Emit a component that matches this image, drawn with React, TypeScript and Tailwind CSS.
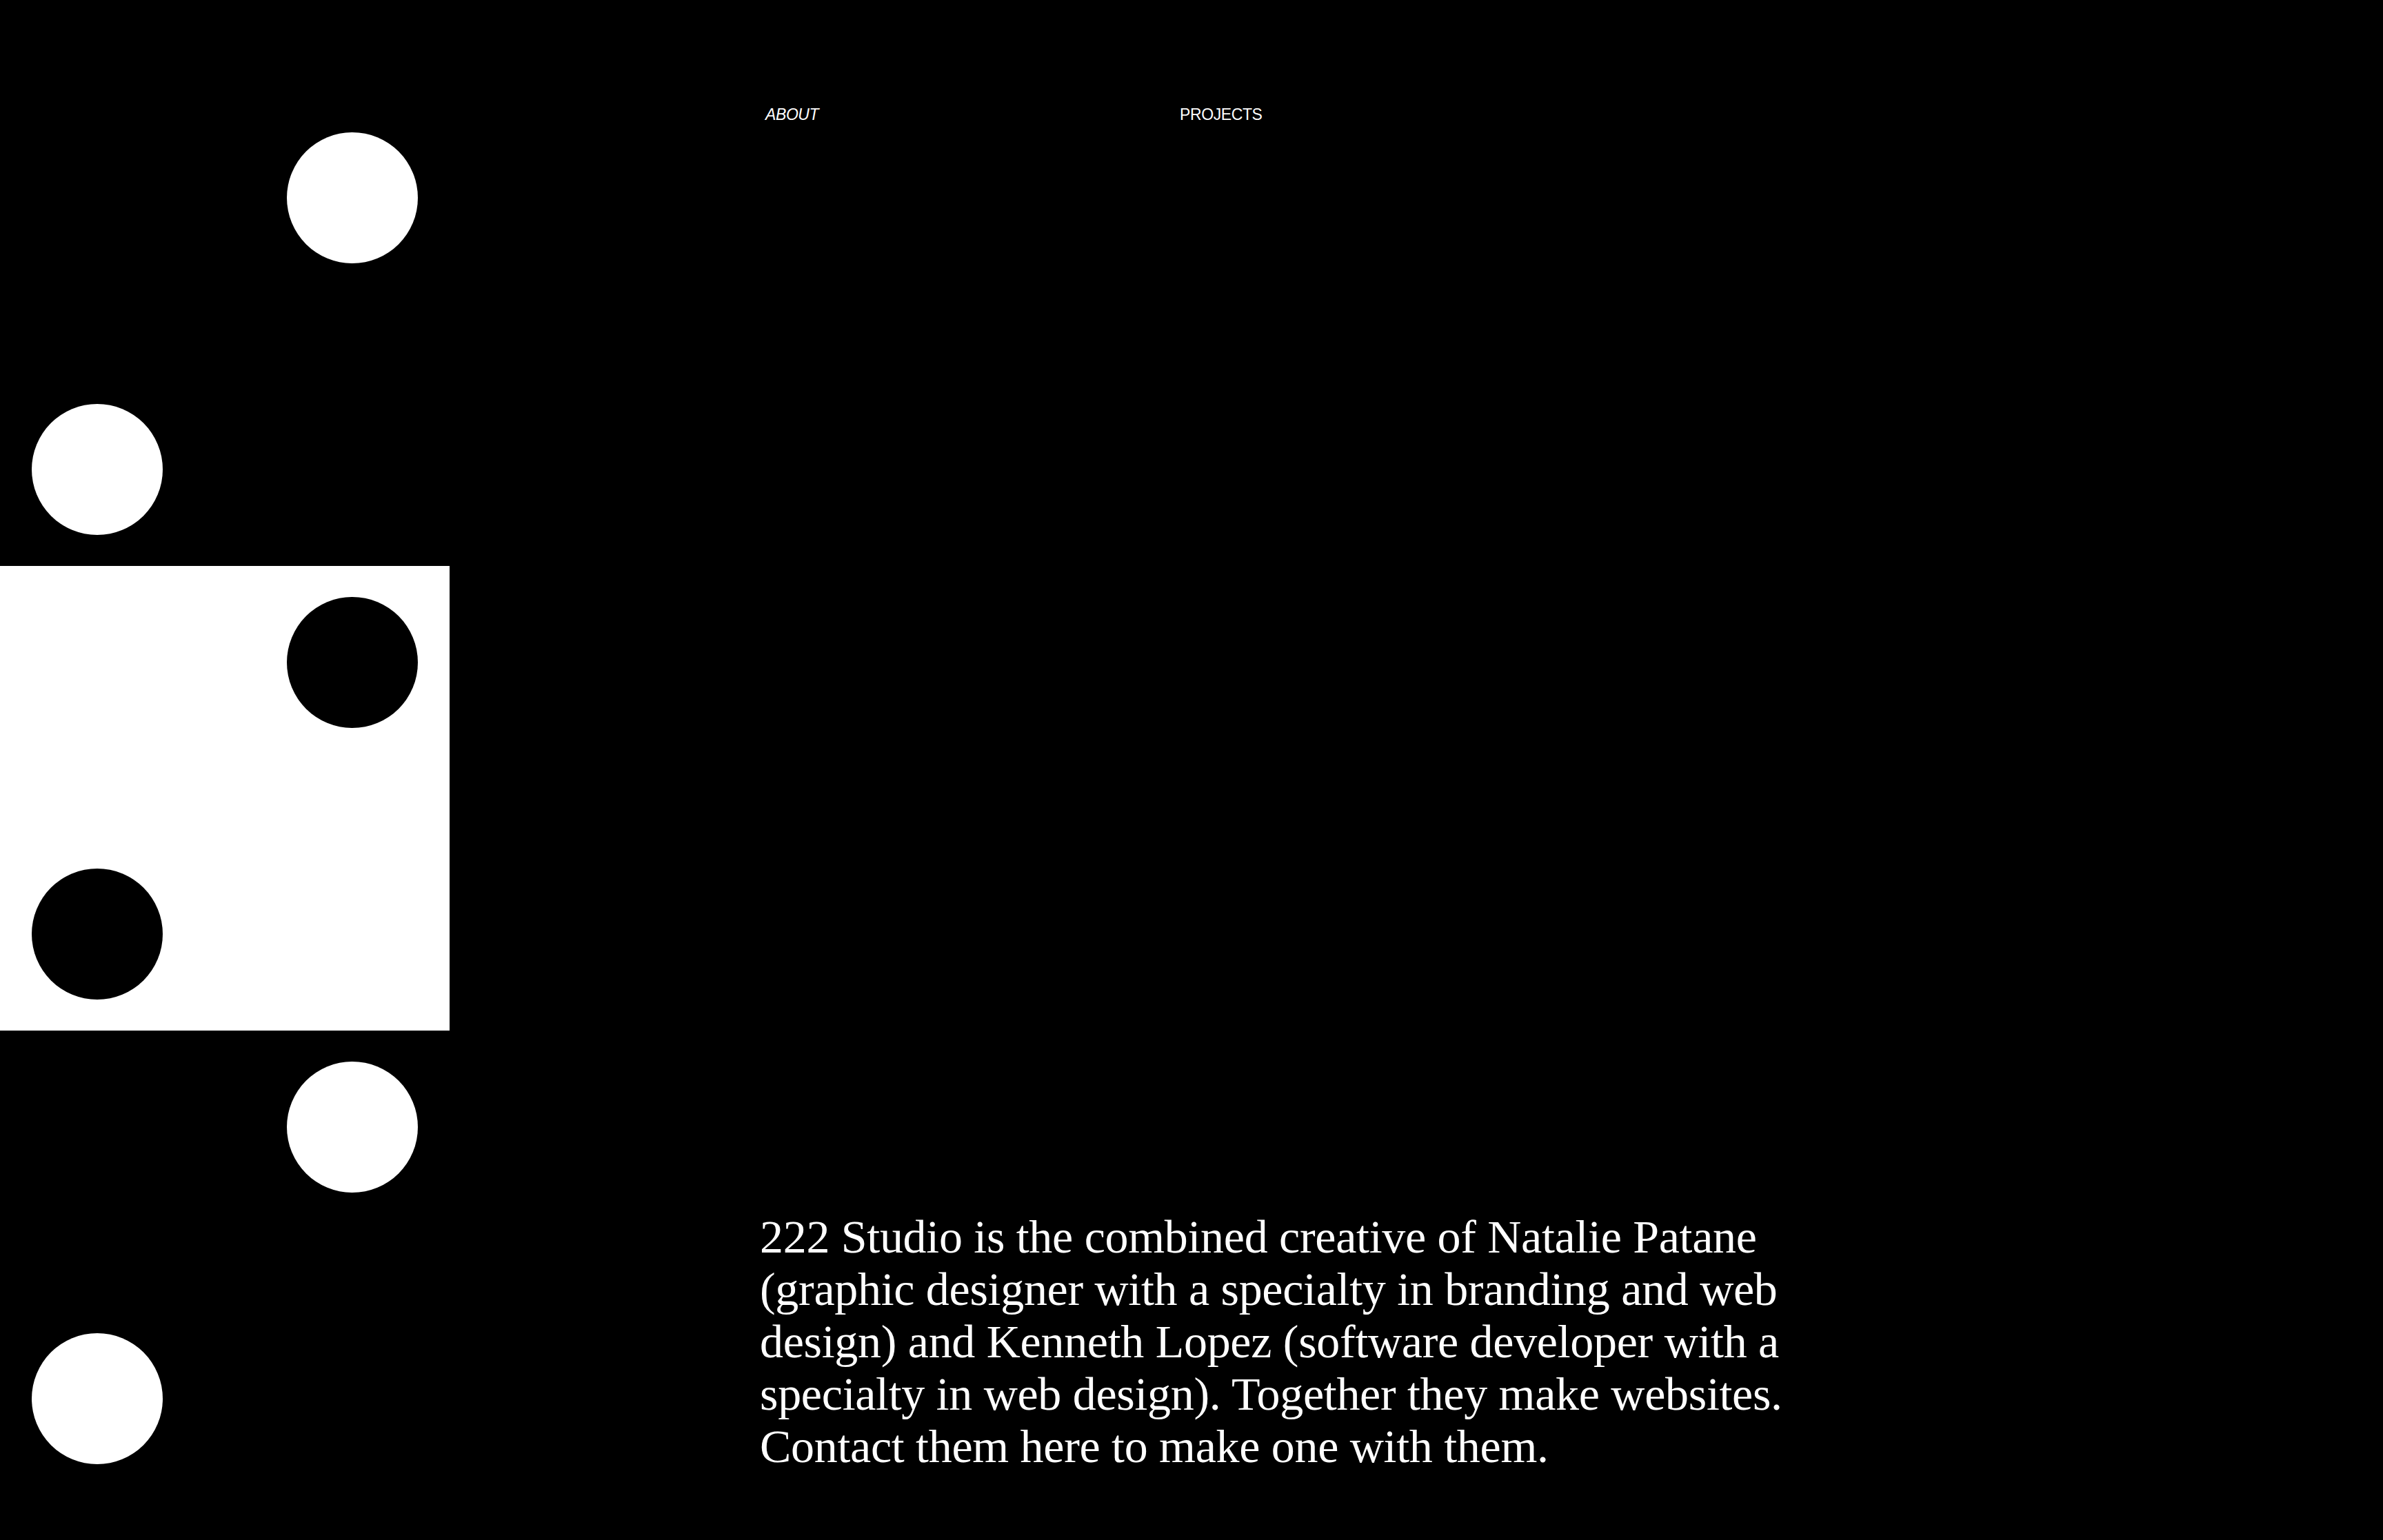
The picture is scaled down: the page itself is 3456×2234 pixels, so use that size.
const Die = ({ inverted }: { inverted?: boolean }) => {
  const dot = inverted ? "bg-black" : "bg-white";
  return (
    <div
      className={`flex h-[674px] w-[652px] flex-col justify-between px-[46px] py-[45px] ${
        inverted ? "bg-white" : "bg-black"
      }`}
    >
      <div className={`h-[190px] w-[190px] self-end rounded-full ${dot}`} />
      <div className={`h-[190px] w-[190px] self-start rounded-full ${dot}`} />
    </div>
  );
};

export default function App() {
  return (
    <div className="flex min-h-[2234px] w-full bg-black text-white">
      {/* three "2" faces, middle one flipped */}
      <aside className="flex shrink-0 flex-col pt-[147px]">
        <Die />
        <Die inverted />
        <Die />
      </aside>

      <main className="flex flex-1 flex-col justify-between pb-[98px] pl-[450px]">
        <nav className="flex pl-[8px] pt-[153px] font-['Liberation_Sans',Arial,sans-serif] text-[23px] leading-[27px] tracking-[-0.4px]">
          <a href="#" className="w-[601px] italic">
            ABOUT
          </a>
          <a href="#">PROJECTS</a>
        </nav>

        <p className="whitespace-nowrap font-['Liberation_Serif','Times_New_Roman',serif] text-[68px] leading-[76px] tracking-[-0.3px]">
          222 Studio is the combined creative of Natalie Patane
          <br />
          (graphic designer with a specialty in branding and web
          <br />
          design) and Kenneth Lopez (software developer with a
          <br />
          specialty in web design). Together they make websites.
          <br />
          Contact them here to make one with them.
        </p>
      </main>
    </div>
  );
}
